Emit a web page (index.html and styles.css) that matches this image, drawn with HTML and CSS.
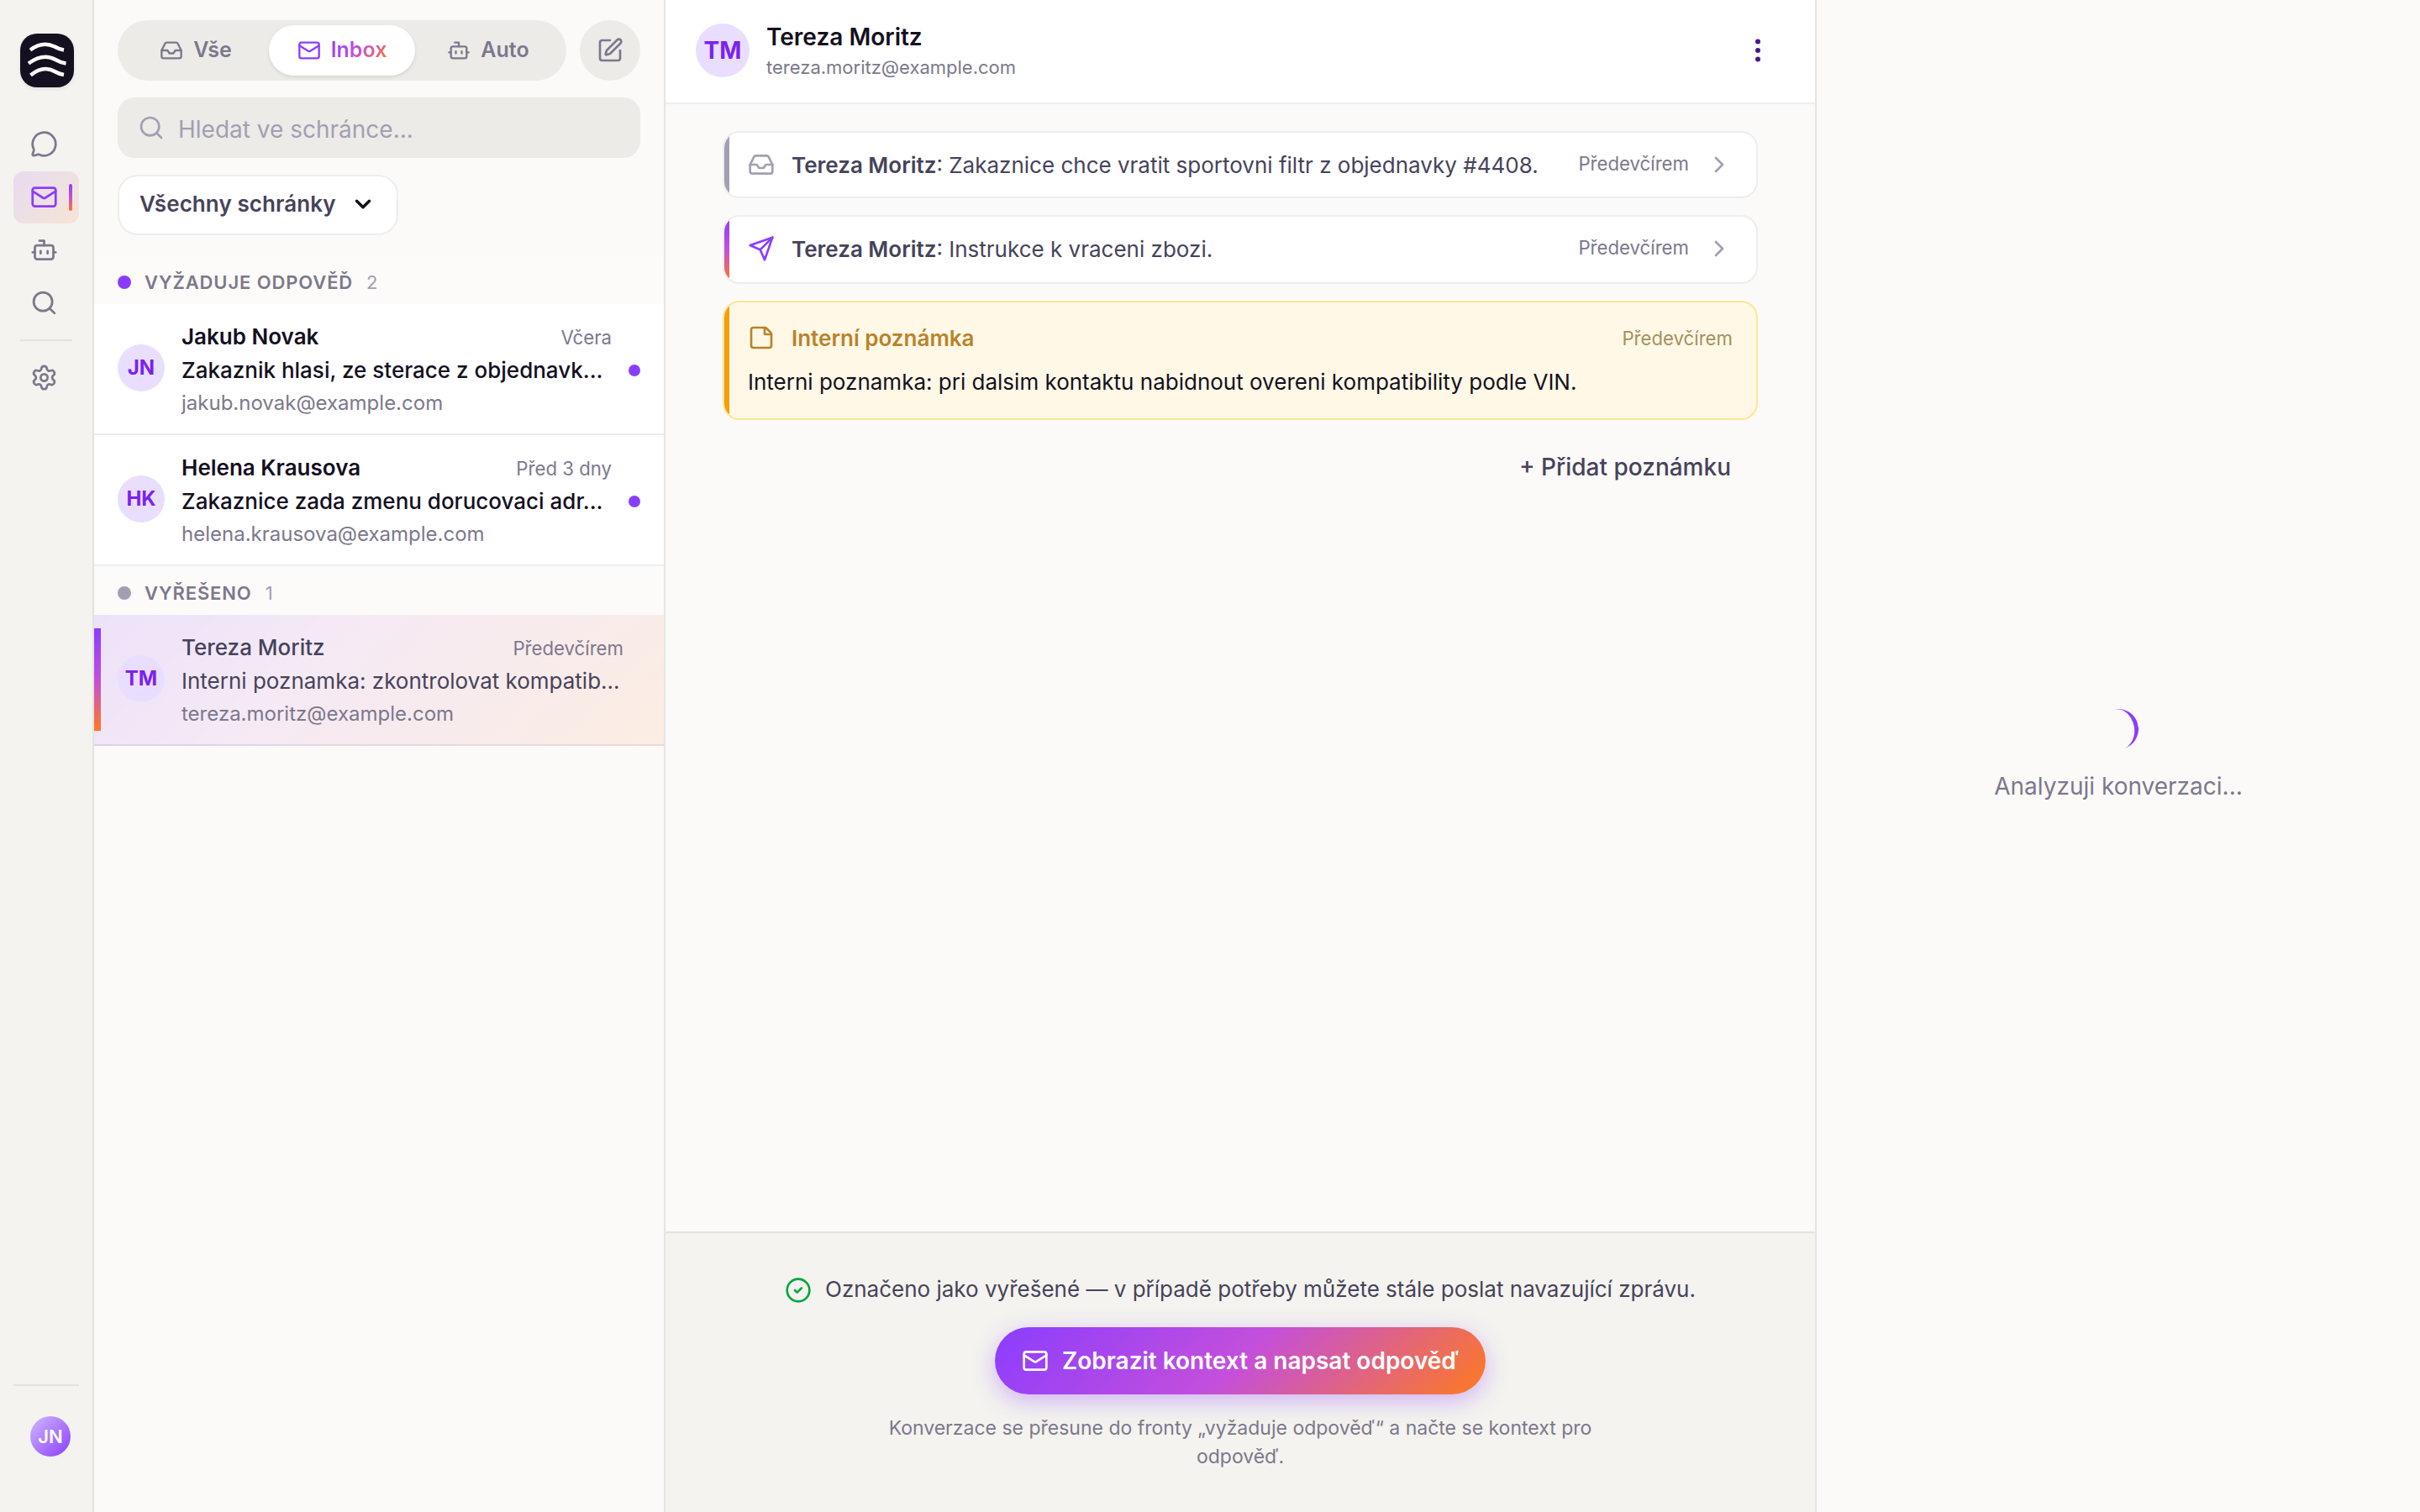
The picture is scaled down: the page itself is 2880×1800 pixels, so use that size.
FILE: index.html
```html
<!DOCTYPE html>
<html lang="cs">

<head>
    <meta charset="UTF-8">
    <meta name="viewport" content="width=device-width, initial-scale=1.0">
    <title>Inbox</title>
    <link rel="stylesheet" href="styles.css">
</head>

<body>
    <!-- shared icons -->
    <svg class="sprite" xmlns="http://www.w3.org/2000/svg">
        <symbol id="i-message" viewBox="0 0 24 24"><path d="M2.992 16.342a2 2 0 0 1 .094 1.167l-1.065 3.29a1 1 0 0 0 1.236 1.168l3.413-.998a2 2 0 0 1 1.099.092 10 10 0 1 0-4.777-4.719"/></symbol>
        <symbol id="i-mail" viewBox="0 0 24 24"><rect x="2" y="4" width="20" height="16" rx="2"/><path d="m22 7-8.991 5.727a2 2 0 0 1-2.009 0L2 7"/></symbol>
        <symbol id="i-bot" viewBox="0 0 24 24"><path d="M12 8V4H8"/><rect x="4" y="8" width="16" height="12" rx="2"/><path d="M2 14h2M20 14h2M15 13v2M9 13v2"/></symbol>
        <symbol id="i-search" viewBox="0 0 24 24"><circle cx="11" cy="11" r="8"/><path d="m21 21-4.3-4.3"/></symbol>
        <symbol id="i-settings" viewBox="0 0 24 24"><path d="M9.671 4.136a2.34 2.34 0 0 1 4.659 0 2.34 2.34 0 0 0 3.319 1.915 2.34 2.34 0 0 1 2.33 4.033 2.34 2.34 0 0 0 0 3.831 2.34 2.34 0 0 1-2.33 4.033 2.34 2.34 0 0 0-3.319 1.915 2.34 2.34 0 0 1-4.659 0 2.34 2.34 0 0 0-3.32-1.915 2.34 2.34 0 0 1-2.33-4.033 2.34 2.34 0 0 0 0-3.831A2.34 2.34 0 0 1 6.35 6.051a2.34 2.34 0 0 0 3.319-1.915"/><circle cx="12" cy="12" r="3"/></symbol>
        <symbol id="i-inbox" viewBox="0 0 24 24"><path d="M22 12h-6l-2 3h-4l-2-3H2"/><path d="M5.45 5.11 2 12v6a2 2 0 0 0 2 2h16a2 2 0 0 0 2-2v-6l-3.45-6.89A2 2 0 0 0 16.76 4H7.24a2 2 0 0 0-1.79 1.11z"/></symbol>
        <symbol id="i-edit" viewBox="0 0 24 24"><path d="M12 3H5a2 2 0 0 0-2 2v14a2 2 0 0 0 2 2h14a2 2 0 0 0 2-2v-7"/><path d="M18.375 2.625a1 1 0 0 1 3 3l-9.013 9.014a2 2 0 0 1-.853.505l-2.873.84a.5.5 0 0 1-.62-.62l.84-2.873a2 2 0 0 1 .506-.852z"/></symbol>
        <symbol id="i-send" viewBox="0 0 24 24"><path d="m22 2-7 20-4-9-9-4Z"/><path d="M22 2 11 13"/></symbol>
        <symbol id="i-down" viewBox="0 0 24 24"><path d="m6 9 6 6 6-6"/></symbol>
        <symbol id="i-right" viewBox="0 0 24 24"><path d="m9 18 6-6-6-6"/></symbol>
        <symbol id="i-note" viewBox="0 0 24 24"><path d="M21 9a2.4 2.4 0 0 0-.706-1.706l-3.588-3.588A2.4 2.4 0 0 0 15 3H5a2 2 0 0 0-2 2v14a2 2 0 0 0 2 2h14a2 2 0 0 0 2-2z"/><path d="M15 3v5a1 1 0 0 0 1 1h5"/></symbol>
        <symbol id="i-dots" viewBox="0 0 24 24"><circle cx="12" cy="5" r="1"/><circle cx="12" cy="12" r="1"/><circle cx="12" cy="19" r="1"/></symbol>
        <symbol id="i-check" viewBox="0 0 24 24"><circle cx="12" cy="12" r="10"/><path d="m9 12 2 2 4-4"/></symbol>
    </svg>

    <div class="app">
        <nav class="sidebar">
            <div class="logo">
                <svg viewBox="0 0 64 64">
                    <path d="M12 19.500C24 10.500 33 11.500 41 15.500Q46 18.500 52 19.500"/>
                    <path d="M10 35.500C23 26 34 26.500 42 31Q48 34.500 54.500 35.500"/>
                    <path d="M12.500 49.500C24 40 33 40.500 41 45Q46 48 52 49"/>
                </svg>
            </div>
            <div class="nav">
                <a class="nav-item"><svg class="icon"><use href="#i-message"/></svg></a>
                <a class="nav-item active"><svg class="icon"><use href="#i-mail"/></svg><span class="nav-bar"></span></a>
                <a class="nav-item"><svg class="icon"><use href="#i-bot"/></svg></a>
                <a class="nav-item"><svg class="icon"><use href="#i-search"/></svg></a>
                <div class="nav-divider"></div>
                <a class="nav-item"><svg class="icon"><use href="#i-settings"/></svg></a>
            </div>
            <div class="sidebar-footer">
                <div class="user">JN</div>
            </div>
        </nav>

        <section class="list">
            <div class="list-tools">
                <div class="tabs-row">
                    <div class="tabs">
                        <button class="tab"><svg class="icon"><use href="#i-inbox"/></svg><span>Vše</span></button>
                        <button class="tab active"><svg class="icon"><use href="#i-mail"/></svg><span>Inbox</span></button>
                        <button class="tab"><svg class="icon"><use href="#i-bot"/></svg><span>Auto</span></button>
                    </div>
                    <button class="compose"><svg class="icon"><use href="#i-edit"/></svg></button>
                </div>
                <div class="search">
                    <svg class="icon"><use href="#i-search"/></svg>
                    <span>Hledat ve schránce...</span>
                </div>
                <button class="select"><span>Všechny schránky</span><svg class="icon"><use href="#i-down"/></svg></button>
            </div>

            <div class="group"><i class="group-dot"></i><span class="group-name">VYŽADUJE ODPOVĚĎ</span><span class="group-count">2</span></div>
            <div class="row unread">
                <div class="avatar">JN</div>
                <div class="row-body">
                    <div class="row-top"><span class="row-name">Jakub Novak</span><span class="time">Včera</span></div>
                    <div class="row-preview">Zakaznik hlasi, ze sterace z objednavk...</div>
                    <div class="row-email">jakub.novak@example.com</div>
                </div>
                <i class="row-dot"></i>
            </div>
            <div class="row unread">
                <div class="avatar">HK</div>
                <div class="row-body">
                    <div class="row-top"><span class="row-name">Helena Krausova</span><span class="time">Před 3 dny</span></div>
                    <div class="row-preview">Zakaznice zada zmenu dorucovaci adr...</div>
                    <div class="row-email">helena.krausova@example.com</div>
                </div>
                <i class="row-dot"></i>
            </div>

            <div class="group done"><i class="group-dot"></i><span class="group-name">VYŘEŠENO</span><span class="group-count">1</span></div>
            <div class="row selected">
                <div class="avatar">TM</div>
                <div class="row-body">
                    <div class="row-top"><span class="row-name">Tereza Moritz</span><span class="time">Předevčírem</span></div>
                    <div class="row-preview">Interni poznamka: zkontrolovat kompatib...</div>
                    <div class="row-email">tereza.moritz@example.com</div>
                </div>
            </div>
        </section>

        <main class="thread">
            <header class="thread-header">
                <div class="avatar large">TM</div>
                <div class="thread-who">
                    <div class="thread-name">Tereza Moritz</div>
                    <div class="thread-email">tereza.moritz@example.com</div>
                </div>
                <svg class="icon kebab"><use href="#i-dots"/></svg>
            </header>

            <div class="messages">
                <div class="message">
                    <svg class="icon"><use href="#i-inbox"/></svg>
                    <div class="message-text"><b>Tereza Moritz</b>: Zakaznice chce vratit sportovni filtr z objednavky #4408.</div>
                    <span class="time">Předevčírem</span>
                    <svg class="icon chevron"><use href="#i-right"/></svg>
                </div>
                <div class="message sent">
                    <svg class="icon"><use href="#i-send"/></svg>
                    <div class="message-text"><b>Tereza Moritz</b>: Instrukce k vraceni zbozi.</div>
                    <span class="time">Předevčírem</span>
                    <svg class="icon chevron"><use href="#i-right"/></svg>
                </div>
                <div class="note">
                    <div class="note-head">
                        <svg class="icon"><use href="#i-note"/></svg>
                        <span class="note-title">Interní poznámka</span>
                        <span class="time">Předevčírem</span>
                    </div>
                    <div class="note-text">Interni poznamka: pri dalsim kontaktu nabidnout overeni kompatibility podle VIN.</div>
                </div>
                <button class="add-note">+ Přidat poznámku</button>
            </div>

            <footer class="reply">
                <div class="reply-status"><svg class="icon"><use href="#i-check"/></svg><span>Označeno jako vyřešené — v případě potřeby můžete stále poslat navazující zprávu.</span></div>
                <button class="reply-button"><svg class="icon"><use href="#i-mail"/></svg><span>Zobrazit kontext a napsat odpověď</span></button>
                <p class="reply-hint">Konverzace se přesune do fronty „vyžaduje odpověď“ a načte se kontext pro odpověď.</p>
            </footer>
        </main>

        <aside class="context">
            <div class="spinner"></div>
            <div class="context-text">Analyzuji konverzaci...</div>
        </aside>
    </div>
</body>

</html>
```
FILE: styles.css
```css
:root {
    --ink: #14101f;
    --ink-2: #46435a;
    --muted: #7c788c;
    --faint: #a39fb3;
    --purple: #8b3dff;
    --bg: #fbfaf8;
    --control: #ecebe7;
    --line: #ededed;
}

* {
    box-sizing: border-box;
}

body {
    margin: 0;
    font-family: Inter, "Noto Sans", sans-serif;
    font-size: 26px;
    color: var(--ink);
    background-color: var(--bg);
}

button {
    font: inherit;
    color: inherit;
    border: none;
    background: none;
    padding: 0;
    margin: 0;
}

.sprite {
    display: none;
}

.icon {
    width: 32px;
    height: 32px;
    flex: none;
    fill: none;
    stroke: currentColor;
    stroke-width: 2;
    stroke-linecap: round;
    stroke-linejoin: round;
}

.app {
    display: flex;
    height: 100vh;
    overflow: hidden;
}

/* sidebar */
.sidebar {
    width: 112px;
    flex: none;
    display: flex;
    flex-direction: column;
    padding: 40px 16px 66px;
    background-color: #f4f3ef;
    border-right: 2px solid #e3e2df;
}

.logo {
    width: 64px;
    height: 64px;
    margin-left: 8px;
    border-radius: 20px;
    background-color: var(--ink);
    box-shadow: 0 2px 4px rgba(20, 16, 31, 0.08);
}

.logo svg {
    display: block;
    fill: none;
    stroke: white;
    stroke-width: 4.4;
}

.nav {
    display: flex;
    flex-direction: column;
    gap: 1px;
    margin-top: 37px;
}

.nav-item {
    display: flex;
    align-items: center;
    justify-content: space-between;
    height: 62px;
    padding: 0 8px 1px 19.5px;
    border-radius: 12px;
    color: var(--muted);
}

.nav-item .icon {
    width: 33px;
    height: 33px;
}

.nav-item.active {
    color: var(--purple);
    background: linear-gradient(135deg, rgba(139, 61, 255, 0.13), rgba(255, 122, 31, 0.12));
}

.nav-bar {
    width: 4px;
    height: 32px;
    border-radius: 2px;
    background: linear-gradient(180deg, #8b3dff, #c44fdb 50%, #ff7a1f);
}

.nav-divider {
    height: 2px;
    margin: 11px 8px 12px;
    background-color: #e3e2df;
}

.sidebar-footer {
    margin-top: auto;
    padding: 36px 0 0 20px;
    border-top: 2px solid #e3e2df;
}

.user {
    width: 48px;
    height: 48px;
    border-radius: 50%;
    background: linear-gradient(135deg, #d0b8ff, #8b3dff);
    color: white;
    font-size: 22px;
    font-weight: 600;
    line-height: 48px;
    text-align: center;
}

/* conversation list */
.list {
    width: 680px;
    flex: none;
    border-right: 2px solid #e6e5e4;
}

.list-tools {
    display: flex;
    flex-direction: column;
    gap: 20px;
    padding: 24px 28px;
}

.tabs-row {
    display: flex;
    gap: 16px;
}

.tabs {
    flex: 1;
    display: flex;
    height: 72px;
    padding: 6px;
    border-radius: 36px;
    background-color: var(--control);
}

.tab {
    flex: 1 1 0;
    display: flex;
    align-items: center;
    justify-content: center;
    gap: 12px;
    border-radius: 30px;
    color: var(--muted);
    font-size: 25px;
    font-weight: 600;
}

.tab span {
    padding-bottom: 2px;
}

.tab .icon {
    width: 28px;
    height: 28px;
}

.tab.active {
    background-color: white;
    box-shadow: 0 2px 4px rgba(20, 16, 31, 0.1);
}

.tab.active .icon {
    color: var(--purple);
}

.tab.active span {
    color: transparent;
    background: linear-gradient(135deg, #8b3dff, #c44fdb 50%, #ff7a1f);
    -webkit-background-clip: text;
    background-clip: text;
}

.compose {
    display: flex;
    align-items: center;
    justify-content: center;
    width: 72px;
    height: 72px;
    border-radius: 50%;
    background-color: var(--control);
    color: var(--muted);
}

.search {
    display: flex;
    align-items: center;
    gap: 16px;
    height: 72px;
    padding: 0 24px;
    border-radius: 20px;
    background-color: var(--control);
    color: var(--faint);
    font-size: 28px;
}

.search span {
    padding-top: 3px;
}

.select {
    display: flex;
    align-items: center;
    align-self: flex-start;
    gap: 17px;
    width: 334px;
    height: 72px;
    padding: 0 24px 3px;
    border: 2px solid var(--line);
    border-radius: 24px;
    background-color: white;
    color: var(--ink-2);
    font-weight: 600;
    letter-spacing: 0.08px;
}

.select .icon {
    width: 30px;
    height: 30px;
    color: var(--ink);
    stroke-width: 2.8;
}

.group {
    display: flex;
    align-items: center;
    height: 58px;
    padding: 16px 28px 10px;
    background-color: #fcfbf9;
    font-size: 22px;
}

.group-dot {
    width: 16px;
    height: 16px;
    border-radius: 50%;
    background-color: var(--purple);
}

.group-name {
    margin: 0 16px;
    font-weight: 600;
    letter-spacing: 0.88px;
    color: var(--muted);
}

.group-count {
    color: var(--faint);
}

.group.done .group-dot {
    background-color: var(--faint);
}

.row {
    display: flex;
    height: 156px;
    padding: 20px 28px 0;
    gap: 20px;
    border-bottom: 2px solid var(--line);
    background-color: white;
}

.avatar {
    width: 56px;
    height: 56px;
    flex: none;
    border-radius: 50%;
    background-color: #e9deff;
    color: #7a22f0;
    font-size: 24px;
    font-weight: 700;
    line-height: 56px;
    text-align: center;
}

.row .avatar {
    margin-top: 28px;
}

.row-body {
    flex: 1;
    min-width: 0;
    line-height: 38px;
}

.row-top {
    display: flex;
    justify-content: space-between;
    height: 38px;
    margin-bottom: 2px;
}

.time {
    font-size: 22.2px;
    color: var(--muted);
}

.row-top .time {
    padding-top: 1px;
}

.row-preview {
    white-space: nowrap;
}

.row-email {
    margin-top: 1px;
    font-size: 24px;
    color: var(--muted);
}

.row.unread .row-name {
    font-weight: 600;
}

.row.unread .row-preview {
    font-weight: 500;
}

.row-dot {
    width: 14px;
    height: 14px;
    margin-top: 52px;
    border-radius: 50%;
    background-color: var(--purple);
}

.row.selected {
    position: relative;
    padding-right: 48px;
    color: var(--ink-2);
    border-bottom-color: rgba(20, 16, 31, 0.08);
    background: linear-gradient(135deg, rgba(139, 61, 255, 0.13), rgba(196, 79, 219, 0.1) 35%, rgba(255, 122, 31, 0.1)) var(--bg);
}

.row.selected .row-name {
    font-weight: 500;
}

.row.selected::before {
    content: "";
    position: absolute;
    left: 0;
    top: 16px;
    bottom: 16px;
    width: 8px;
    background: linear-gradient(180deg, #8b3dff, #c44fdb 50%, #ff7a1f);
}

/* thread */
.thread {
    width: 1370px;
    flex: none;
    display: flex;
    flex-direction: column;
    border-right: 2px solid #e6e5e4;
}

.thread-header {
    display: flex;
    align-items: center;
    gap: 20px;
    height: 124px;
    padding: 0 50px 2px 36px;
    border-bottom: 2px solid var(--line);
    background-color: white;
}

.avatar.large {
    width: 64px;
    height: 64px;
    font-size: 28px;
    line-height: 64px;
}

.thread-who {
    flex: 1;
}

.thread-name {
    font-size: 28px;
    font-weight: 600;
    line-height: 40px;
}

.thread-email {
    font-size: 22px;
    line-height: 32px;
    color: var(--muted);
}

.kebab {
    width: 36px;
    height: 36px;
    color: #4a1590;
}

.messages {
    flex: 1;
    display: flex;
    flex-direction: column;
    gap: 20px;
    padding: 32px 68px 0;
}

.message,
.note {
    position: relative;
    overflow: hidden;
    border: 2px solid var(--line);
    border-radius: 20px;
    background-color: white;
}

.message::before,
.note::before {
    content: "";
    position: absolute;
    left: 0;
    top: 0;
    bottom: 0;
    width: 6px;
    background: var(--faint);
}

.message {
    display: flex;
    align-items: center;
    height: 80px;
    padding: 0 28px;
    gap: 20px;
}

.message .icon {
    color: var(--faint);
}

.message.sent {
    height: 82px;
    padding-bottom: 2px;
}

.message.sent::before {
    background: linear-gradient(180deg, #8b3dff, #c44fdb 50%, #ff7a1f);
}

.message.sent .icon:first-child {
    color: var(--purple);
}

.message-text {
    flex: 1;
    color: var(--ink-2);
}

.message-text b {
    font-weight: 600;
}

.message .time {
    padding-bottom: 4px;
}

.note {
    height: 142px;
    padding: 26px 28px 0;
    border-color: #fde696;
    background-color: #fff8e6;
}

.note::before {
    background: #f59e0b;
}

.note-head {
    display: flex;
    align-items: center;
    gap: 20px;
    height: 32px;
    color: #b8832a;
}

.note-title {
    flex: 1;
    font-weight: 600;
}

.note .time {
    color: #a68f5e;
}

.note-text {
    margin-top: 17px;
    line-height: 40px;
}

.add-note {
    align-self: flex-end;
    margin: 16px 32px 0 0;
    font-size: 28px;
    font-weight: 500;
    line-height: 40px;
    color: var(--ink-2);
}

.reply {
    display: flex;
    flex-direction: column;
    align-items: center;
    height: 334px;
    padding-top: 48px;
    border-top: 2px solid #e3e2df;
    background-color: #f4f3ef;
}

.reply-status {
    display: flex;
    align-items: center;
    gap: 16px;
    height: 40px;
    color: var(--ink-2);
}

.reply-status span {
    padding-bottom: 3px;
}

.reply-status .icon {
    color: #00a63e;
}

.reply-button {
    display: flex;
    align-items: center;
    gap: 16px;
    height: 80px;
    margin-top: 24px;
    padding: 0 32px;
    border-radius: 40px;
    background: linear-gradient(135deg, #8b3dff, #c44fdb 50%, #ff7a1f);
    box-shadow: 0 8px 28px rgba(139, 61, 255, 0.35);
    color: white;
    font-size: 28px;
    font-weight: 600;
}

.reply-hint {
    width: 880px;
    margin: 23px 0 0;
    font-size: 23px;
    line-height: 34px;
    text-align: center;
    color: var(--muted);
}

/* context panel */
.context {
    flex: 1;
    display: flex;
    flex-direction: column;
    align-items: center;
    justify-content: center;
}

.spinner {
    width: 48px;
    height: 48px;
    border-right: 5px solid var(--purple);
    border-radius: 50%;
    transform: rotate(-11deg);
}

.context-text {
    margin-top: 24px;
    font-size: 28px;
    line-height: 40px;
    color: var(--muted);
}
```
